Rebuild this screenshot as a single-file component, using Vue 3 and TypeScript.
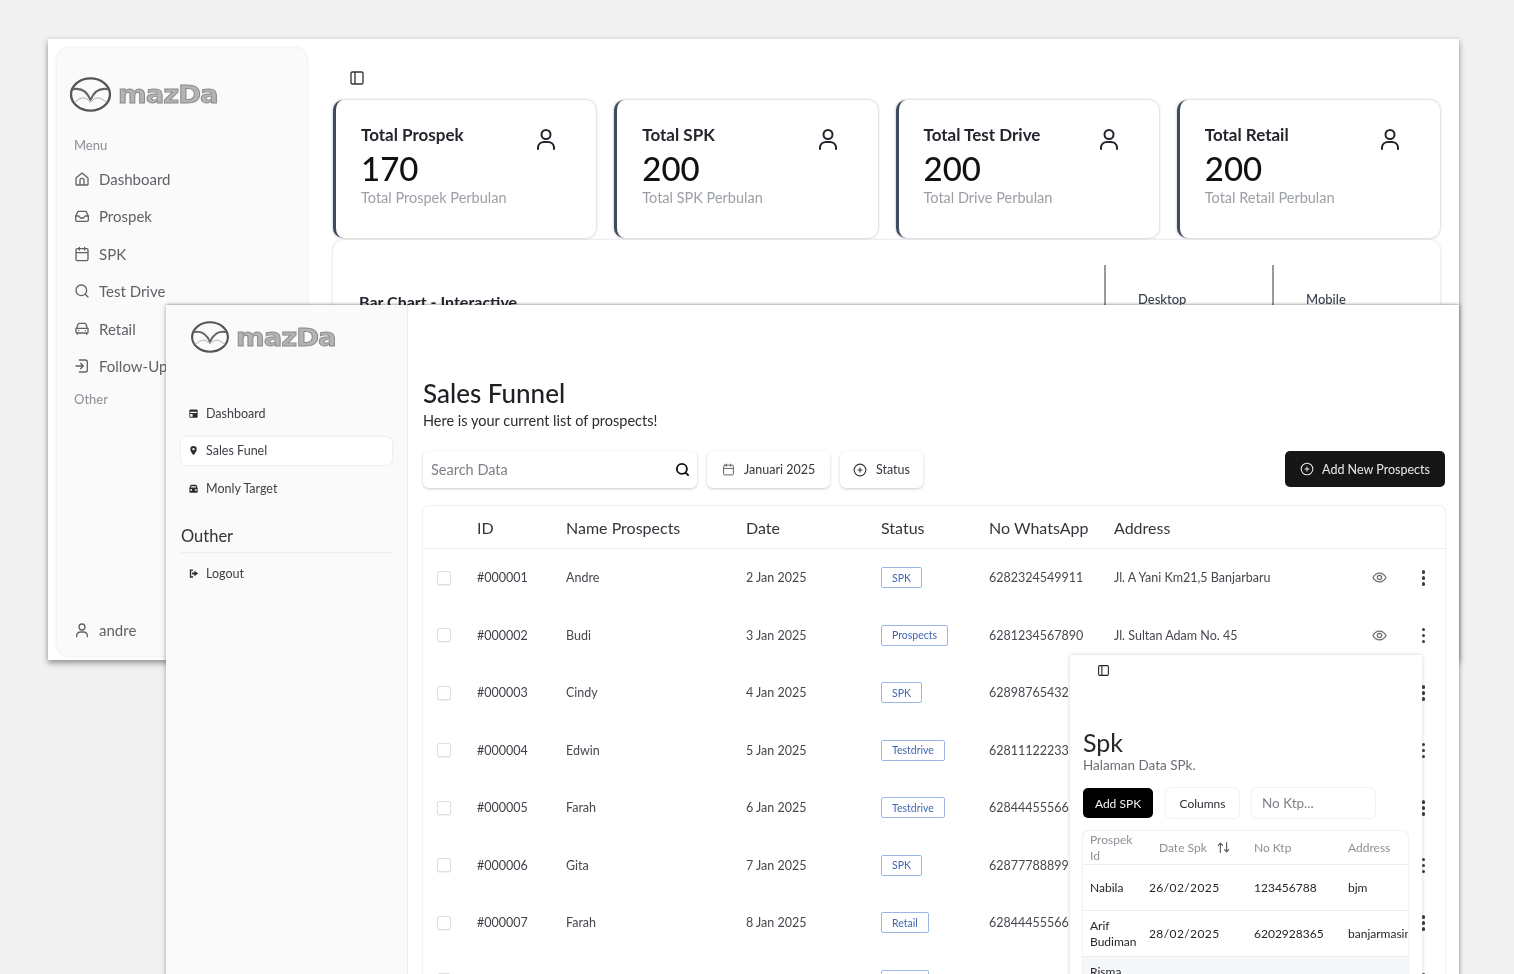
<script setup lang="ts">
const icons: Record<string, string> = {
  home: 'M3 10.5 12 3l9 7.5V20a1 1 0 0 1-1 1H4a1 1 0 0 1-1-1ZM9 21v-7a3 3 0 0 1 6 0v7',
  inbox: 'M2.5 12h5l2 3h5l2-3h5M6 5h12l3.5 7v6a2 2 0 0 1-2 2h-15a2 2 0 0 1-2-2v-6Z',
  calendar: 'M8 2v4M16 2v4M3 10h18M5 4h14a2 2 0 0 1 2 2v14a2 2 0 0 1-2 2H5a2 2 0 0 1-2-2V6a2 2 0 0 1 2-2Z',
  search: 'M11 3a8 8 0 1 0 0 16 8 8 0 0 0 0-16ZM21 21l-4.3-4.3',
  car: 'M4 11l2-6a2 2 0 0 1 2-1.500h8A2 2 0 0 1 18 5l2 6M3 11h18v6a1 1 0 0 1-1 1H4a1 1 0 0 1-1-1ZM5 18v2M19 18v2M7 14.500h.01M17 14.500h.01',
  login: 'M8 3h9a3 3 0 0 1 3 3v12a3 3 0 0 1-3 3H8M3 12h11M10 8l4 4-4 4',
  user: 'M12 3a4.500 4.500 0 1 0 0 9 4.500 4.500 0 0 0 0-9ZM4 22v-2a6 6 0 0 1 6-5h4a6 6 0 0 1 6 5v2',
  panel: 'M5 3h14a2 2 0 0 1 2 2v14a2 2 0 0 1-2 2H5a2 2 0 0 1-2-2V5a2 2 0 0 1 2-2ZM9 3v18',
  plus: 'M12 2a10 10 0 1 0 0 20 10 10 0 0 0 0-20ZM12 8.500v7M8.500 12h7',
  eye: 'M1.500 12S5.500 5 12 5s10.500 7 10.500 7-4 7-10.500 7S1.500 12 1.500 12ZM12 8.500a3.500 3.500 0 1 0 0 7 3.500 3.500 0 0 0 0-7Z',
  sort: 'M7 20V5M3.500 8.500 7 5l3.500 3.500M17 4v15M13.500 15.500 17 19l3.500-3.500',
}

const oldMenu = [
  { label: 'Dashboard', icon: 'home' },
  { label: 'Prospek', icon: 'inbox' },
  { label: 'SPK', icon: 'calendar' },
  { label: 'Test Drive', icon: 'search' },
  { label: 'Retail', icon: 'car' },
  { label: 'Follow-Up', icon: 'login' },
]

const cards = [
  { title: 'Total Prospek', value: '170', sub: 'Total Prospek Perbulan' },
  { title: 'Total SPK', value: '200', sub: 'Total SPK Perbulan' },
  { title: 'Total Test Drive', value: '200', sub: 'Total Drive Perbulan' },
  { title: 'Total Retail', value: '200', sub: 'Total Retail Perbulan' },
]

const prospects = [
  { id: '#000001', name: 'Andre', date: '2 Jan 2025', status: 'SPK', phone: '6282324549911', address: 'Jl. A Yani Km21,5 Banjarbaru' },
  { id: '#000002', name: 'Budi', date: '3 Jan 2025', status: 'Prospects', phone: '6281234567890', address: 'Jl. Sultan Adam No. 45' },
  { id: '#000003', name: 'Cindy', date: '4 Jan 2025', status: 'SPK', phone: '62898765432', address: '' },
  { id: '#000004', name: 'Edwin', date: '5 Jan 2025', status: 'Testdrive', phone: '62811122233', address: '' },
  { id: '#000005', name: 'Farah', date: '6 Jan 2025', status: 'Testdrive', phone: '62844455566', address: '' },
  { id: '#000006', name: 'Gita', date: '7 Jan 2025', status: 'SPK', phone: '62877788899', address: '' },
  { id: '#000007', name: 'Farah', date: '8 Jan 2025', status: 'Retail', phone: '62844455566', address: '' },
  { id: '#000008', name: 'Hadi', date: '9 Jan 2025', status: 'Retail', phone: '62855566677', address: '' },
]

const spk = [
  { name: 'Nabila', date: '26/02/2025', ktp: '123456788', address: 'bjm' },
  { name: 'Arif Budiman', date: '28/02/2025', ktp: '6202928365', address: 'banjarmasin' },
  { name: 'Risma Putri', date: '03/03/2025', ktp: '120202021500', address: 'Kandangan' },
]
</script>

<template>
  <div class="desktop">
    <section class="window win-back">
      <aside class="old-side">
        <div class="logo">
          <svg class="mark" viewBox="0 0 44 38" fill="none">
            <ellipse cx="22" cy="19" rx="20" ry="16.500" stroke="#555" stroke-width="2.400" />
            <path d="M4.500 13.500C12 12 18 15 22 24.500 26 15 32 12 39.500 13.500" stroke="#666" stroke-width="2.200" />
            <path d="M6 27C12 21 17 21 22 27 27 21 32 21 38 27" stroke="#aaa" stroke-width="1" />
          </svg>
          <span class="wordmark">mazDa</span>
        </div>
        <div class="old-label first">Menu</div>
        <div v-for="m in oldMenu" :key="m.label" class="old-item">
          <svg class="old-icon" viewBox="0 0 24 24"><path :d="icons[m.icon]" /></svg>
          <span>{{ m.label }}</span>
        </div>
        <div class="old-label">Other</div>
        <div class="old-item old-foot">
          <svg class="old-icon" viewBox="0 0 24 24"><path :d="icons.user" /></svg>
          <span>andre</span>
        </div>
      </aside>
      <div class="old-main">
        <svg class="toggle" viewBox="0 0 24 24"><path :d="icons.panel" /></svg>
        <div class="cards">
          <article v-for="c in cards" :key="c.title" class="card">
            <div>
              <h3>{{ c.title }}</h3>
              <div class="value">{{ c.value }}</div>
              <p>{{ c.sub }}</p>
            </div>
            <svg class="card-icon" viewBox="0 0 24 24"><path :d="icons.user" /></svg>
          </article>
        </div>
        <div class="chart">
          <div class="chart-title">Bar Chart - Interactive</div>
          <div class="chart-cell">Desktop</div>
          <div class="chart-cell">Mobile</div>
        </div>
      </div>
    </section>

    <section class="window win-mid">
      <aside class="side">
        <div class="logo logo-mid">
          <svg class="mark" viewBox="0 0 44 38" fill="none">
            <ellipse cx="22" cy="19" rx="20" ry="16.500" stroke="#555" stroke-width="2.400" />
            <path d="M4.500 13.500C12 12 18 15 22 24.500 26 15 32 12 39.500 13.500" stroke="#666" stroke-width="2.200" />
            <path d="M6 27C12 21 17 21 22 27 27 21 32 21 38 27" stroke="#aaa" stroke-width="1" />
          </svg>
          <span class="wordmark">mazDa</span>
        </div>
        <nav class="nav">
          <div class="nav-item">
            <svg class="solid" viewBox="0 0 24 24"><path d="M5 3h14a2 2 0 0 1 2 2v14a2 2 0 0 1-2 2H5a2 2 0 0 1-2-2V5a2 2 0 0 1 2-2Zm0 5v3h14V8Zm0 5v6h5v-6Z" fill-rule="evenodd" /></svg>
            <span>Dashboard</span>
          </div>
          <div class="nav-item active">
            <svg class="solid" viewBox="0 0 24 24"><path d="M12 2a7 7 0 0 0-7 7c0 5 7 13 7 13s7-8 7-13a7 7 0 0 0-7-7Zm0 4.500a2.500 2.500 0 1 1 0 5 2.500 2.500 0 0 1 0-5Z" fill-rule="evenodd" /></svg>
            <span>Sales Funel</span>
          </div>
          <div class="nav-item">
            <svg class="solid" viewBox="0 0 24 24"><path d="M7 4h10a2 2 0 0 1 2 1.500L21 11v8a2 2 0 0 1-2 2H5a2 2 0 0 1-2-2v-8l2-5.500A2 2 0 0 1 7 4Zm0 9a2 2 0 1 0 0 4 2 2 0 0 0 0-4Zm10 0a2 2 0 1 0 0 4 2 2 0 0 0 0-4ZM7 7l-1 3h12l-1-3Z" fill-rule="evenodd" /></svg>
            <span>Monly Target</span>
          </div>
        </nav>
        <div class="section-title">Outher</div>
        <div class="nav-item">
          <svg class="solid" viewBox="0 0 24 24"><path d="M4 3h7v3H7v12h4v3H4ZM14 6l8 6-8 6v-4H9v-4h5Z" /></svg>
          <span>Logout</span>
        </div>
      </aside>
      <div class="main">
        <h1>Sales Funnel</h1>
        <p class="lead">Here is your current list of prospects!</p>
        <div class="toolbar">
          <div class="search">
            <span>Search Data</span>
            <svg viewBox="0 0 24 24"><path :d="icons.search" /></svg>
          </div>
          <div class="tool date">
            <svg viewBox="0 0 24 24"><path :d="icons.calendar" /></svg>
            <span>Januari 2025</span>
          </div>
          <div class="tool status">
            <svg viewBox="0 0 24 24"><path :d="icons.plus" /></svg>
            <span>Status</span>
          </div>
          <button class="add">
            <svg viewBox="0 0 24 24"><path :d="icons.plus" /></svg>
            <span>Add New Prospects</span>
          </button>
        </div>
        <div class="table">
          <div class="row head">
            <span></span>
            <span>ID</span>
            <span>Name Prospects</span>
            <span>Date</span>
            <span>Status</span>
            <span>No WhatsApp</span>
            <span>Address</span>
          </div>
          <div v-for="p in prospects" :key="p.id" class="row">
            <span class="check"></span>
            <span class="cell-id">{{ p.id }}</span>
            <span>{{ p.name }}</span>
            <span>{{ p.date }}</span>
            <span><em class="badge">{{ p.status }}</em></span>
            <span>{{ p.phone }}</span>
            <span>{{ p.address }}</span>
            <svg class="eye" viewBox="0 0 24 24"><path :d="icons.eye" /></svg>
            <span class="dots"><i></i><i></i><i></i></span>
          </div>
        </div>
      </div>
    </section>

    <section class="window win-front">
      <svg class="toggle small" viewBox="0 0 24 24"><path :d="icons.panel" /></svg>
      <h2>Spk</h2>
      <p class="spk-lead">Halaman Data SPk.</p>
      <div class="spk-tools">
        <button class="spk-add">Add SPK</button>
        <button class="spk-col">Columns</button>
        <div class="spk-input">No Ktp...</div>
      </div>
      <div class="spk-table">
        <div class="spk-row spk-head">
          <span class="spk-name">Prospek Id</span>
          <span class="spk-date-head">Date Spk
            <svg viewBox="0 0 24 24"><path :d="icons.sort" /></svg>
          </span>
          <span>No Ktp</span>
          <span>Address</span>
        </div>
        <div v-for="(s, i) in spk" :key="s.name" class="spk-row" :class="{ hover: i === 2 }">
          <span class="spk-name">{{ s.name }}</span>
          <span class="spk-date">{{ s.date }}</span>
          <span>{{ s.ktp }}</span>
          <span class="spk-addr">{{ s.address }}</span>
        </div>
      </div>
    </section>
  </div>
</template>

<style>
html, body { margin: 0; background: #f1f1f1; overflow: hidden; }
</style>

<style scoped>
.desktop {
  position: relative;
  width: 1514px;
  height: 974px;
  overflow: hidden;
  background: #f1f1f1;
  font-family: Lato, "Open Sans", sans-serif;
  color: #1b1b1f;
  filter: blur(0.35px);
}
svg { fill: none; stroke: currentColor; stroke-width: 2; stroke-linecap: round; stroke-linejoin: round; flex: none; }
h1, h2, h3, p { margin: 0; font-weight: 400; }
button { font-family: inherit; border: 0; }

.window { position: absolute; background: #fff; overflow: hidden; }
.win-back {
  left: 48px; top: 39px; width: 1411px; height: 621px;
  display: flex; padding: 9px 0 4px 9px; box-sizing: border-box;
  box-shadow: 0 3px 6px rgba(0, 0, 0, .4), 0 -1px 2px rgba(225, 215, 235, .6);
}
.win-mid {
  left: 166px; top: 305px; width: 1293px; height: 720px;
  display: flex;
  box-shadow: 1px 0 4px rgba(0, 0, 0, .3), -2px 0 4px rgba(0, 0, 0, .1), 0 -1px 1px rgba(0, 0, 0, .08);
}
.win-front {
  left: 1070px; top: 655px; width: 352px; height: 340px;
  padding: 9px 13px 0; box-sizing: border-box;
  box-shadow: 0 0 4px rgba(0, 0, 0, .18);
}

.old-side {
  width: 250px; flex: none; box-sizing: border-box;
  background: #fafafa; border-radius: 12px;
  padding: 28px 12px 16px;
  display: flex; flex-direction: column;
  box-shadow: 0 0 3px rgba(0, 0, 0, .14);
}
.logo { display: flex; align-items: center; gap: 6px; height: 36px; }
.mark { width: 43px; height: 37px; }
.wordmark {
  font-family: "DejaVu Sans", sans-serif;
  font-weight: 700;
  font-size: 27px;
  line-height: 1;
  letter-spacing: -1px;
  color: #b4b4b4;
  -webkit-text-stroke: 1px #8a8a8a;
  transform: scale(1.02, .9);
  transform-origin: left center;
}
.old-label { font-size: 13px; line-height: 16px; color: #8c8f95; padding-left: 5px; margin-top: 6px; }
.old-label.first { margin-top: 25px; margin-bottom: 7px; }
.old-item { display: flex; align-items: center; gap: 9px; height: 37.5px; padding-left: 5px; font-size: 15px; color: #5f6368; white-space: nowrap; }
.old-icon { width: 16px; height: 16px; }
.old-foot { margin-top: auto; height: 20px; }

.old-main { flex: 1; min-width: 0; padding: 22px 19px 0 26px; }
.toggle { display: block; width: 16px; height: 16px; margin-left: 16px; color: #333; }
.cards { display: grid; grid-template-columns: repeat(4, 1fr); gap: 18px; margin-top: 14px; }
.card {
  height: 138px; box-sizing: border-box;
  display: flex; justify-content: space-between;
  background: #fff; border-radius: 10px;
  border-left: 3px solid #3f4c60;
  padding: 23px 38px 0 25px;
  box-shadow: 0 0 3px rgba(0, 0, 0, .28);
}
.card h3 { font-size: 17px; line-height: 24px; font-weight: 700; color: #23262d; }
.card .value { font-size: 33px; line-height: 40px; font-weight: 500; color: #111; margin-top: 1px; }
.card p { font-size: 14.500px; line-height: 18px; color: #9b9fa6; margin-top: 1px; }
.card-icon { width: 24px; height: 24px; margin-top: 4px; color: #22252c; }
.chart {
  height: 400px; margin-top: 2px; box-sizing: border-box;
  display: flex; align-items: flex-start;
  border-radius: 10px; box-shadow: 0 0 3px rgba(0, 0, 0, .18);
  padding: 25px 0 0 26px;
}
.chart-title { flex: 1; margin-top: 27px; font-size: 16px; line-height: 20px; font-weight: 700; color: #23262d; }
.chart-cell {
  width: 168px; height: 60px; box-sizing: border-box;
  border-left: 2px solid #9a9a9a;
  padding: 26px 0 0 32px;
  font-size: 13px; line-height: 16px; font-weight: 500; color: #3a4250;
}

.side {
  width: 242px; flex: none; box-sizing: border-box;
  background: #fafafa; border-right: 1px solid #ececec;
  padding: 16px 15px 0;
}
.logo-mid { margin: 0 0 46px 9px; height: 32px; }
.logo-mid .mark { width: 40px; height: 34px; }
.nav { display: flex; flex-direction: column; gap: 9.500px; }
.nav-item {
  height: 28px; display: flex; align-items: center; gap: 7px;
  padding-left: 7px; box-sizing: border-box;
  font-size: 12.500px; color: #3c3f45; border-radius: 5px;
}
.nav-item.active { background: #fff; box-shadow: 0 0 2px rgba(0, 0, 0, .16); }
.solid { width: 11px; height: 11px; fill: #2a2c30; stroke: none; }
.section-title {
  margin-top: 24px; padding-bottom: 6px; margin-bottom: 6px;
  font-size: 16.500px; line-height: 20px; color: #303338;
  border-bottom: 1px solid #ececec;
}

.main { flex: 1; min-width: 0; padding: 72px 14px 0 15px; }
.main h1 { font-size: 26px; line-height: 32px; font-weight: 500; color: #1d1f24; }
.lead { font-size: 14.500px; line-height: 20px; margin-top: 2px; color: #2a2c30; }
.toolbar { display: flex; align-items: flex-start; margin-top: 20px; }
.search, .tool {
  height: 37px; box-sizing: border-box; display: flex; align-items: center;
  background: #fff; border-radius: 6px; box-shadow: 0 1px 3px rgba(0, 0, 0, .2);
}
.search { width: 274px; justify-content: space-between; padding: 0 7px 0 8px; font-size: 14.500px; color: #7d8187; margin-right: 10px; }
.search svg { width: 15px; height: 15px; color: #111; stroke-width: 3; }
.tool { font-size: 12.500px; color: #34373c; gap: 9px; margin-right: 10px; }
.tool svg { width: 14px; height: 14px; }
.date { width: 123px; padding-left: 15px; box-sizing: border-box; }
.date svg { width: 13px; height: 13px; stroke-width: 1.700; color: #55585e; }
.status { width: 83px; padding-left: 13px; }
.add {
  margin-left: auto; width: 160px; height: 36px;
  display: flex; align-items: center; justify-content: center; gap: 8px;
  background: #161616; color: #e8e8e8; border-radius: 5px; font-size: 12.500px;
}
.add svg { width: 14px; height: 14px; stroke-width: 1.800; }

.table { margin-top: 18px; border-radius: 6px; box-shadow: 0 0 2px rgba(0, 0, 0, .2); font-size: 12.500px; color: #45484e; }
.row {
  display: grid;
  grid-template-columns: 54px 89px 180px 135px 108px 125px 1fr 16px 43px;
  align-items: center;
  height: 57.500px;
  padding-right: 14px;
}
.row.head { height: 42px; border-bottom: 1px solid #efefef; font-size: 16px; color: #33363b; }
.check { width: 14px; height: 14px; margin-left: 14px; border-radius: 2px; border: 1px solid #dcdee2; box-sizing: border-box; box-shadow: 0 1px 1px rgba(0, 0, 0, .06); }
.cell-id { color: #3f4248; }
.badge {
  display: inline-flex; align-items: center; height: 21px; padding: 0 10px;
  box-sizing: border-box; border: 1px solid #9ab6e4; border-radius: 2px;
  font-style: normal; font-size: 10.500px; color: #3f66b4;
}
.eye { width: 15px; height: 15px; color: #6a6d72; }
.dots { display: flex; flex-direction: column; align-items: flex-end; gap: 2.500px; padding-right: 6px; }
.dots i { width: 3.500px; height: 3.500px; border-radius: 50%; background: #3a3c40; }

.toggle.small { width: 13px; height: 13px; margin-left: 14px; color: #222; }
.win-front h2 { font-size: 25px; line-height: 30px; margin-top: 50px; color: #26282c; }
.spk-lead { font-size: 13.500px; line-height: 16px; color: #6a6e75; }
.spk-tools { display: flex; gap: 13px; margin-top: 15px; align-items: center; }
.spk-add, .spk-col { height: 30px; border-radius: 5px; font-size: 12px; }
.spk-add { width: 70px; background: #000; color: #f2f2f2; }
.spk-col { width: 73px; background: #fff; color: #2c2e33; box-shadow: 0 0 2px rgba(0, 0, 0, .18); }
.spk-input {
  width: 123px; height: 30px; box-sizing: border-box; padding-left: 10px;
  display: flex; align-items: center; border-radius: 5px;
  font-size: 13.500px; color: #7f8288; box-shadow: 0 0 2px rgba(0, 0, 0, .18);
}
.spk-table { margin-top: 13px; width: 325px; border-radius: 6px; overflow: hidden; box-shadow: 0 0 2px rgba(0, 0, 0, .2); font-size: 12px; color: #24262b; }
.spk-row {
  display: grid; grid-template-columns: 66px 105px 94px 60px;
  align-items: center; height: 46px; box-sizing: border-box;
  border-bottom: 1px solid #eceded;
}
.spk-row > span { line-height: 16px; }
.spk-name { padding-left: 7px; padding-right: 8px; }
.spk-head { height: 34px; color: #8d9097; }
.spk-date-head { display: flex; align-items: center; gap: 9px; padding-left: 10px; white-space: nowrap; }
.spk-date-head svg { width: 15px; height: 15px; color: #55585e; stroke-width: 1.800; }
.spk-date { letter-spacing: .4px; }
.spk-addr { white-space: nowrap; }
.hover { background: #f6f7f8; }
</style>
